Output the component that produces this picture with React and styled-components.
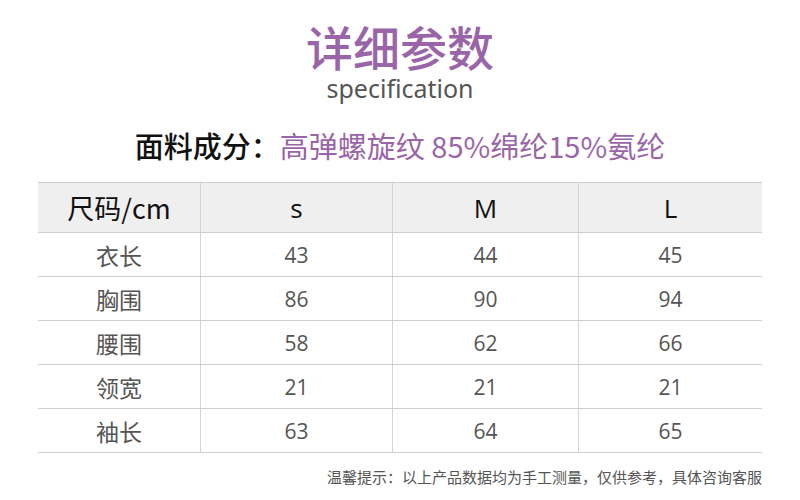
import React from "react";
import styled, { createGlobalStyle } from "styled-components";

const Global = createGlobalStyle`
  html, body { margin: 0; padding: 0; background: #fff; }
  body { font-family: "Noto Sans CJK SC", "Noto Sans", sans-serif; }
`;

const Page = styled.div`
  width: 800px;
  height: 500px;
  box-sizing: border-box;
  padding-top: 21px;
  display: flex;
  flex-direction: column;
  align-items: center;
`;

const Title = styled.h1`
  margin: 0;
  font-size: 47px;
  line-height: 50px;
  font-weight: 500;
  color: #9a65a8;
`;

const Subtitle = styled.div`
  margin-top: 2px;
  font-family: "Noto Sans", sans-serif;
  font-size: 25px;
  line-height: 30px;
  color: #555;
`;

const Fabric = styled.div`
  margin-top: 23px;
  font-size: 29px;
  line-height: 38px;
  font-weight: 500;
  color: #111;
`;

const Purple = styled.span`
  color: #9a65a8;
  font-weight: 400;
`;

const Table = styled.div`
  margin-top: 18px;
  width: 724px;
  display: grid;
  grid-template-columns: 162px 192px 186px 184px;
  border-top: 1px solid #cfcfcf;
`;

const Cell = styled.div`
  height: ${(p) => (p.$head ? "50px" : "44px")};
  display: flex;
  align-items: center;
  justify-content: center;
  background: ${(p) => (p.$head ? "#efefef" : "#fff")};
  border-bottom: 1px solid #cfcfcf;
  border-left: ${(p) => (p.$first ? "none" : "1px solid #d4d4d4")};
  color: ${(p) => (p.$head ? "#111" : "#555")};
  font-size: ${(p) => (p.$head ? (p.$num ? "26px" : "27px") : p.$num ? "21px" : "23px")};
  font-weight: ${(p) => (p.$num ? 500 : 400)};
  font-family: ${(p) =>
    p.$num
      ? '"Open Sans", "Noto Sans CJK SC", sans-serif'
      : '"Noto Sans CJK SC", sans-serif'};
  box-sizing: border-box;
`;

const Note = styled.div`
  align-self: flex-end;
  margin-right: 38px;
  margin-top: 13px;
  font-size: 15px;
  color: #555;
`;

const headers = ["尺码/cm", "s", "M", "L"];
const rows = [
  ["衣长", "43", "44", "45"],
  ["胸围", "86", "90", "94"],
  ["腰围", "58", "62", "66"],
  ["领宽", "21", "21", "21"],
  ["袖长", "63", "64", "65"],
];

export default function App() {
  return (
    <Page>
      <Global />
      <Title>详细参数</Title>
      <Subtitle>specification</Subtitle>
      <Fabric>
        面料成分：<Purple>高弹螺旋纹 85%绵纶15%氨纶</Purple>
      </Fabric>
      <Table>
        {headers.map((h, i) => (
          <Cell key={h} $head $first={i === 0} $num={i > 0}>
            {h}
          </Cell>
        ))}
        {rows.map((r) =>
          r.map((v, i) => (
            <Cell key={r[0] + i} $first={i === 0} $num={i > 0}>
              {v}
            </Cell>
          ))
        )}
      </Table>
      <Note>温馨提示：以上产品数据均为手工测量，仅供参考，具体咨询客服</Note>
    </Page>
  );
}
